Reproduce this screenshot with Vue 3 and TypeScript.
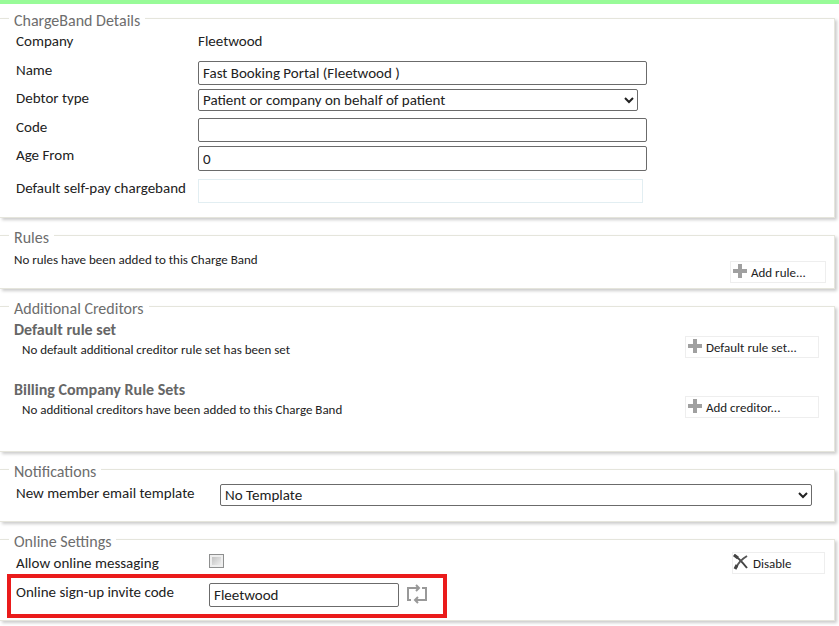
<script setup lang="ts">
import { ref } from 'vue'

const name = ref('Fast Booking Portal (Fleetwood )')
const debtorType = ref('Patient or company on behalf of patient')
const code = ref('')
const ageFrom = ref('0')
const selfPay = ref('')
const template = ref('No Template')
const messaging = ref(false)
const inviteCode = ref('Fleetwood')
</script>

<template>
  <main class="page">
    <fieldset class="panel">
      <legend>ChargeBand Details</legend>
      <div class="details">
        <span>Company</span>
        <span>Fleetwood</span>
        <label for="name">Name</label>
        <input id="name" v-model="name" class="field" type="text" />
        <label for="debtor">Debtor type</label>
        <select id="debtor" v-model="debtorType" class="field debtor">
          <option>Patient or company on behalf of patient</option>
        </select>
        <label for="code">Code</label>
        <input id="code" v-model="code" class="field" type="text" />
        <label for="age">Age From</label>
        <input id="age" v-model="ageFrom" class="field age" type="text" />
        <label for="selfpay">Default self-pay chargeband</label>
        <input id="selfpay" v-model="selfPay" class="field pale" type="text" readonly />
      </div>
    </fieldset>

    <fieldset class="panel">
      <legend>Rules</legend>
      <div class="rules">
        <p class="note">No rules have been added to this Charge Band</p>
        <button type="button" class="action short">
          <svg class="plus" viewBox="0 0 14 14"><path d="M5 0h4v5h5v4H9v5H5V9H0V5h5z" /></svg>
          Add rule...
        </button>
      </div>
    </fieldset>

    <fieldset class="panel">
      <legend>Additional Creditors</legend>
      <div class="creditors">
        <section class="ruleset">
          <div>
            <h2>Default rule set</h2>
            <p class="note inset">No default additional creditor rule set has been set</p>
          </div>
          <button type="button" class="action long">
            <svg class="plus" viewBox="0 0 14 14"><path d="M5 0h4v5h5v4H9v5H5V9H0V5h5z" /></svg>
            Default rule set...
          </button>
        </section>
        <section class="ruleset">
          <div>
            <h2>Billing Company Rule Sets</h2>
            <p class="note inset">No additional creditors have been added to this Charge Band</p>
          </div>
          <button type="button" class="action long">
            <svg class="plus" viewBox="0 0 14 14"><path d="M5 0h4v5h5v4H9v5H5V9H0V5h5z" /></svg>
            Add creditor...
          </button>
        </section>
      </div>
    </fieldset>

    <fieldset class="panel">
      <legend>Notifications</legend>
      <div class="notify">
        <label for="template">New member email template</label>
        <select id="template" v-model="template" class="field">
          <option>No Template</option>
        </select>
      </div>
    </fieldset>

    <fieldset class="panel">
      <legend>Online Settings</legend>
      <div class="messaging">
        <label for="messaging">Allow online messaging</label>
        <input id="messaging" v-model="messaging" class="tick" type="checkbox" />
        <button type="button" class="action disable">
          <svg class="cross" viewBox="0 0 16 16">
            <path d="M1 1C6 4 10 9 14 14" stroke="#444" stroke-width="2" />
            <path d="M14 2C9 5 5 9 3 14" stroke="#555" stroke-width="2" />
            <path d="M1 1l4 3M2 15l2-4" stroke="#444" stroke-width="3" />
          </svg>
          Disable
        </button>
      </div>
      <div class="invite">
        <label for="invite">Online sign-up invite code</label>
        <input id="invite" v-model="inviteCode" class="field" type="text" />
        <button type="button" class="refresh" aria-label="Generate code">
          <svg viewBox="0 0 20 20">
            <path d="M4 16H1V4h11M15 4h4v12H8" fill="none" stroke="#999" stroke-width="2" />
            <path d="M9 1l3 3-3 3M11 13l-3 3 3 3" fill="none" stroke="#999" stroke-width="2" />
          </svg>
        </button>
      </div>
    </fieldset>
  </main>
</template>

<style>
body {
  background: #fff;
}
</style>

<style scoped>
.page {
  border-top: 4px solid #98fb98;
  padding: 5px 4px 6px 0;
  display: flex;
  flex-direction: column;
  gap: 8px;
  font-family: Calibri, Carlito, 'Open Sans', sans-serif;
  font-size: 15px;
  line-height: 18px;
  color: #222;
}

.panel {
  min-width: 0;
  margin: 0;
  padding: 0;
  border: 1px solid #e5e5dc;
  border-left: 0;
  box-shadow: 2px 2px 3px #ccc;
}

legend {
  margin-left: 9px;
  padding: 4px 5px 0;
  font-size: 16px;
  line-height: 15px;
  color: #6d6d6d;
  background: #fff;
}

.details {
  display: grid;
  grid-template-columns: 182px 1fr;
  grid-template-rows: 29px 28px 29px 28px 33px 24px;
  align-items: start;
  padding: 4px 16px 14px;
}

.field {
  box-sizing: border-box;
  width: 100%;
  max-width: 449px;
  height: 24px;
  margin: 0;
  padding: 1px 4px;
  border: 1px solid #6b6b6b;
  border-radius: 2px;
  background: #fff;
  font: inherit;
  color: inherit;
}

select.field {
  height: 22px;
  padding: 0;
}

.debtor {
  max-width: 440px;
}

.age {
  height: 25px;
}

.pale {
  max-width: 445px;
  border-color: #e2eef2;
  border-radius: 0;
}

.rules {
  display: flex;
  justify-content: space-between;
  padding: 5px 8px 5px 14px;
}

.rules .action {
  margin-top: 11px;
}

.note {
  margin: 0;
  font-size: 13px;
  line-height: 20px;
}

.inset {
  padding-left: 8px;
}

h2 {
  margin: 0;
  font-size: 16px;
  line-height: 20px;
  color: #666;
}

.action {
  display: flex;
  align-items: center;
  gap: 4px;
  box-sizing: border-box;
  height: 22px;
  padding: 2px 2px 0;
  border: 1px solid #eee;
  background: #fff;
  font: inherit;
  font-size: 13px;
  color: inherit;
}

.short {
  width: 96px;
}

.long {
  width: 134px;
  margin-top: 16px;
}

.disable {
  width: 93px;
  padding: 2px 0 0;
}

.plus {
  width: 14px;
  height: 14px;
  margin-bottom: 4px;
  fill: #a0a0a0;
}

.creditors {
  display: flex;
  flex-direction: column;
  gap: 20px;
  padding: 4px 15px 31px 14px;
}

.ruleset {
  display: flex;
  justify-content: space-between;
}

.notify {
  display: grid;
  grid-template-columns: 204px 1fr;
  padding: 5px 22px 15px 16px;
}

.notify .field {
  max-width: none;
}

.messaging {
  display: grid;
  grid-template-columns: 193px 1fr auto;
  align-items: center;
  padding: 3px 9px 0 16px;
}

.tick {
  appearance: none;
  width: 15px;
  height: 14px;
  margin: 0 0 4px;
  border: 1px solid #8e8f8f;
  background: linear-gradient(135deg, #b8b8b8, #f8f8f8);
  box-shadow: inset 0 0 0 2px #eee;
}

.cross {
  width: 16px;
  height: 16px;
  margin-bottom: 4px;
  fill: none;
}

.invite {
  box-sizing: border-box;
  display: grid;
  grid-template-columns: 193px 190px auto;
  justify-content: start;
  align-items: start;
  width: 440px;
  margin: 0 0 2px 7px;
  padding: 5px 4px 7px 5px;
  border: 4px solid #ea1b1b;
}

.refresh {
  display: flex;
  margin: 1px 0 0 8px;
  padding: 0;
  border: 0;
  background: none;
}

.refresh svg {
  width: 20px;
  height: 20px;
}
</style>
